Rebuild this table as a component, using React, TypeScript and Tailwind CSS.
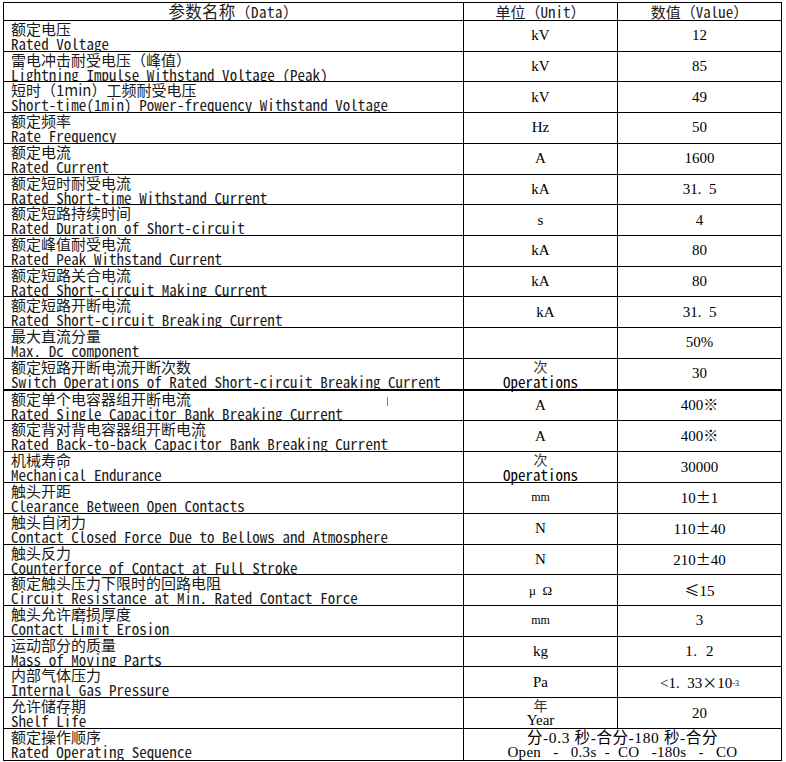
import React from "react";

type Row = {
  zh: string;
  en: string;
  unit?: React.ReactNode;
  value?: React.ReactNode;
  thick?: boolean;
};

const MONO = "font-['Noto_Sans_Mono_CJK_SC','Liberation_Mono','Noto_Sans_CJK_SC',monospace]";
const SERIF = "font-['Liberation_Serif','Noto_Sans_CJK_SC',serif]";
const CJK = "font-['Noto_Sans_CJK_SC',sans-serif]";

const Ops = ({ zh, en }: { zh: string; en: string }) => (
  <div className="flex flex-col items-center leading-[15px]">
    <span className={`${CJK} text-[14px] text-[#333]`}>{zh}</span>
    <span className={`${MONO} text-[15px]`}>{en}</span>
  </div>
);

const PM = ({ a, b }: { a: string; b: string }) => (
  <span>
    {a}
    <span className={CJK}>±</span>
    {b}
  </span>
);

const rows: Row[] = [
  { zh: "额定电压", en: "Rated Voltage", unit: "kV", value: "12" },
  { zh: "雷电冲击耐受电压（峰值）", en: "Lightning Impulse Withstand Voltage (Peak)", unit: "kV", value: "85" },
  { zh: "短时（1min）工频耐受电压", en: "Short-time(1min) Power-frequency Withstand Voltage", unit: "kV", value: "49" },
  { zh: "额定频率", en: "Rate Frequency", unit: "Hz", value: "50" },
  { zh: "额定电流", en: "Rated Current", unit: "A", value: "1600" },
  { zh: "额定短时耐受电流", en: "Rated Short-time Withstand Current", unit: "kA", value: <span className="whitespace-pre">31.  5</span> },
  { zh: "额定短路持续时间", en: "Rated Duration of Short-circuit", unit: "s", value: "4" },
  { zh: "额定峰值耐受电流", en: "Rated Peak Withstand Current", unit: "kA", value: "80" },
  { zh: "额定短路关合电流", en: "Rated Short-circuit Making Current", unit: "kA", value: "80" },
  { zh: "额定短路开断电流", en: "Rated Short-circuit Breaking Current", unit: <span className="pl-[10px]">kA</span>, value: <span className="whitespace-pre">31.  5</span> },
  { zh: "最大直流分量", en: "Max. Dc component", unit: "", value: "50%" },
  { zh: "额定短路开断电流开断次数", en: "Switch Operations of Rated Short-circuit Breaking Current", unit: <Ops zh="次" en="Operations" />, value: "30", thick: true },
  { zh: "额定单个电容器组开断电流", en: "Rated Single Capacitor Bank Breaking Current", unit: "A", value: "400※" },
  { zh: "额定背对背电容器组开断电流", en: "Rated Back-to-back Capacitor Bank Breaking Current", unit: "A", value: "400※" },
  { zh: "机械寿命", en: "Mechanical Endurance", unit: <Ops zh="次" en="Operations" />, value: "30000" },
  { zh: "触头开距", en: "Clearance Between Open Contacts", unit: <span className="text-[12px]">mm</span>, value: <PM a="10" b="1" /> },
  { zh: "触头自闭力", en: "Contact Closed Force Due to Bellows and Atmosphere", unit: "N", value: <PM a="110" b="40" /> },
  { zh: "触头反力", en: "Counterforce of Contact at Full Stroke", unit: "N", value: <PM a="210" b="40" /> },
  {
    zh: "额定触头压力下限时的回路电阻",
    en: "Circuit Resistance at Min. Rated Contact Force",
    unit: <span className="text-[13px] whitespace-pre">μ  Ω</span>,
    value: (
      <span>
        <span className={CJK}>≤</span>15
      </span>
    ),
  },
  { zh: "触头允许磨损厚度", en: "Contact Limit Erosion", unit: <span className="text-[12px]">mm</span>, value: "3" },
  { zh: "运动部分的质量", en: "Mass of Moving Parts", unit: "kg", value: <span className="whitespace-pre tracking-[0.5px]">1.  2</span> },
  {
    zh: "内部气体压力",
    en: "Internal Gas Pressure",
    unit: "Pa",
    value: (
      <span className="whitespace-pre">
        {"<1.  33"}
        <span className={CJK}>×</span>10<sup className="text-[8px] relative -top-[2px]">-3</sup>
      </span>
    ),
  },
  {
    zh: "允许储存期",
    en: "Shelf Life",
    unit: (
      <div className="flex flex-col items-center leading-[15px]">
        <span className={`${CJK} text-[14px] text-[#333]`}>年</span>
        <span>Year</span>
      </div>
    ),
    value: "20",
  },
];

export default function App() {
  return (
    <div className="w-[786px] h-[762px] bg-white relative overflow-hidden text-black">
      <div className="absolute left-[387px] top-[397px] w-[1px] h-[9px] bg-[#2aa6b8]" />
      <div className="pt-[2px] pl-[3px]">
        <div className="grid grid-cols-[460px_154px_164px] grid-rows-[18px_repeat(24,1fr)] h-[759px] w-[779px] border-l border-t border-black">
          <div className={`border-r border-b border-black flex items-center justify-center ${MONO} text-[15px] leading-[15px] text-[#222]`}>
            <span className={`${CJK} text-[16.5px] tracking-[0.3px]`}>参数名称</span>
            <span className="tracking-[0.5px]">（Data）</span>
          </div>
          <div className={`border-r border-b border-black flex items-center justify-center ${MONO} text-[15px] leading-[15px] text-[#222]`}>
            <span className={CJK}>单位</span>（Unit）
          </div>
          <div className={`border-r border-b border-black flex items-center justify-center ${MONO} text-[15px] leading-[15px] text-[#222]`}>
            <span className={CJK}>数值</span>（Value）
          </div>
          {rows.map((r, i) => {
            const b = r.thick ? "border-b-2" : "border-b";
            return (
              <React.Fragment key={i}>
                <div className={`border-r ${b} border-black pl-[7px] overflow-hidden text-[#1a1a1a]`}>
                  <div className={`${CJK} text-[15px] leading-[15px] whitespace-nowrap`}>{r.zh}</div>
                  <div className={`${MONO} text-[15px] leading-[15px] whitespace-nowrap tracking-[0.04px]`}>{r.en}</div>
                </div>
                <div className={`border-r ${b} border-black flex items-center justify-center ${SERIF} text-[15px] leading-[15px]`}>
                  {r.unit}
                </div>
                <div className={`border-r ${b} border-black flex items-center justify-center ${SERIF} text-[15px] leading-[15px]`}>
                  {r.value}
                </div>
              </React.Fragment>
            );
          })}
          <div className="border-r border-b border-black pl-[7px] overflow-hidden text-[#1a1a1a]">
            <div className={`${CJK} text-[15px] leading-[15px] whitespace-nowrap`}>额定操作顺序</div>
            <div className={`${MONO} text-[15px] leading-[15px] whitespace-nowrap tracking-[0.04px]`}>Rated Operating Sequence</div>
          </div>
          <div className="col-span-2 border-r border-b border-black flex flex-col items-center justify-center leading-[15px] text-[15.5px]">
            <span className={`${SERIF} whitespace-pre tracking-[0.6px]`}>
              <span className={CJK}>分</span>-0.3 <span className={CJK}>秒</span>-<span className={CJK}>合分</span>-180 <span className={CJK}>秒</span>-<span className={CJK}>合分</span>
            </span>
            <span className={`${SERIF} whitespace-pre text-[15px] tracking-[0.3px]`}>{"Open   -   0.3s  -  CO   -180s   -   CO"}</span>
          </div>
        </div>
      </div>
    </div>
  );
}
